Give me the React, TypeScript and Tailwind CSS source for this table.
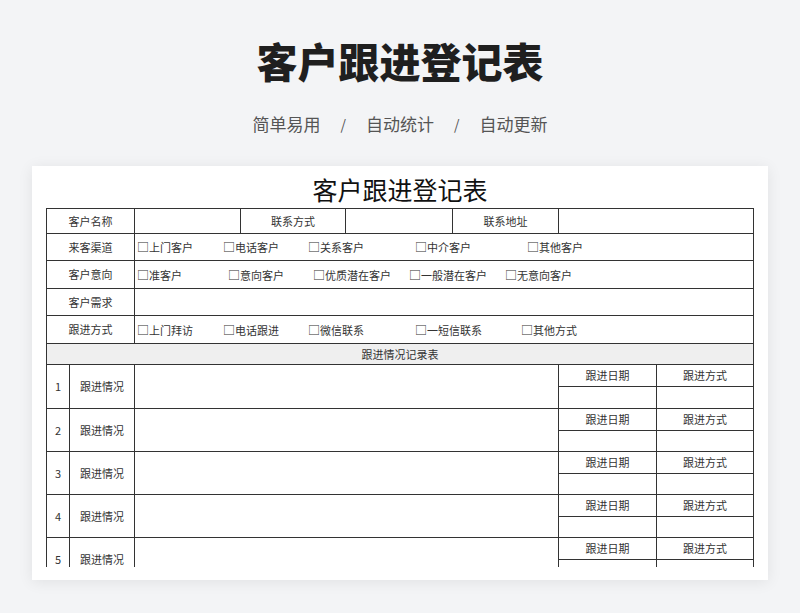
import React from "react";

const font = { fontFamily: '"Noto Sans CJK SC", "Noto Sans", sans-serif' };

function Cell({
  w,
  children,
  className = "",
}: {
  w: string;
  children?: React.ReactNode;
  className?: string;
}) {
  return (
    <div
      className={`${w} shrink-0 border-r border-[#333] flex items-center justify-center ${className}`}
    >
      {children}
    </div>
  );
}

function Checks({ items }: { items: [string, string][] }) {
  return (
    <div className="flex-1 flex items-center pl-[2px] border-r border-[#333] h-full">
      {items.map(([label, w]) => (
        <span key={label} className={`${w} shrink-0 whitespace-nowrap`}>
          <span className="text-[12px]">□</span>
          {label}
        </span>
      ))}
    </div>
  );
}

function Record({ n, h }: { n: number; h: string }) {
  return (
    <div className={`flex ${h} border-b border-[#333]`}>
      <Cell w="w-[23px]">{n}</Cell>
      <Cell w="w-[65px]">跟进情况</Cell>
      <Cell w="w-[424px]" />
      <div className="w-[98px] shrink-0 border-r border-[#333] flex flex-col">
        <div className="h-[22px] flex items-center justify-center border-b border-[#333]">跟进日期</div>
        <div className="flex-1" />
      </div>
      <div className="flex-1 border-r border-[#333] flex flex-col">
        <div className="h-[22px] flex items-center justify-center border-b border-[#333]">跟进方式</div>
        <div className="flex-1" />
      </div>
    </div>
  );
}

export default function App() {
  return (
    <div className="w-[800px] h-[613px] overflow-hidden bg-[#f3f4f6] flex flex-col items-center" style={font}>
      <h1 className="mt-[40px] h-[41px] leading-[41px] text-[41px] font-black text-[#1f1f1f]">
        客户跟进登记表
      </h1>
      <div className="mt-[31px] h-[24px] leading-[24px] text-[17px] text-[#555] flex items-center">
        <span>简单易用</span>
        <span className="mx-[20px] text-[14px]">/</span>
        <span>自动统计</span>
        <span className="mx-[20px] text-[14px]">/</span>
        <span>自动更新</span>
      </div>
      <div className="mt-[30px] w-[736px] h-[414px] bg-white shadow-[0_2px_14px_rgba(0,0,0,0.08)] pt-[7px] px-[14px] pb-[13px] flex flex-col">
        <div className="h-[35px] leading-[33px] text-center text-[25px] text-[#111]">客户跟进登记表</div>
        <div className="h-[359px] overflow-hidden">
          <div className="w-[708px] border-l border-t border-[#333] text-[11px] text-[#333]">
            <div className="flex h-[25px] border-b border-[#333]">
              <Cell w="w-[88px]">客户名称</Cell>
              <Cell w="w-[106px]" />
              <Cell w="w-[105px]">联系方式</Cell>
              <Cell w="w-[107px]" />
              <Cell w="w-[106px]">联系地址</Cell>
              <Cell w="flex-1" />
            </div>
            <div className="flex h-[27px] border-b border-[#333]">
              <Cell w="w-[88px]">来客渠道</Cell>
              <Checks
                items={[
                  ["上门客户", "w-[86px]"],
                  ["电话客户", "w-[85px]"],
                  ["关系客户", "w-[107px]"],
                  ["中介客户", "w-[112px]"],
                  ["其他客户", "w-[80px]"],
                ]}
              />
            </div>
            <div className="flex h-[28px] border-b border-[#333]">
              <Cell w="w-[88px]">客户意向</Cell>
              <Checks
                items={[
                  ["准客户", "w-[91px]"],
                  ["意向客户", "w-[85px]"],
                  ["优质潜在客户", "w-[96px]"],
                  ["一般潜在客户", "w-[96px]"],
                  ["无意向客户", "w-[80px]"],
                ]}
              />
            </div>
            <div className="flex h-[27px] border-b border-[#333]">
              <Cell w="w-[88px]">客户需求</Cell>
              <Cell w="flex-1" />
            </div>
            <div className="flex h-[28px] border-b border-[#333]">
              <Cell w="w-[88px]">跟进方式</Cell>
              <Checks
                items={[
                  ["上门拜访", "w-[86px]"],
                  ["电话跟进", "w-[85px]"],
                  ["微信联系", "w-[107px]"],
                  ["一短信联系", "w-[106px]"],
                  ["其他方式", "w-[80px]"],
                ]}
              />
            </div>
            <div className="flex h-[21px] border-b border-[#333] border-r bg-[#efefef] items-center justify-center">
              跟进情况记录表
            </div>
            <Record n={1} h="h-[44px]" />
            <Record n={2} h="h-[43px]" />
            <Record n={3} h="h-[43px]" />
            <Record n={4} h="h-[43px]" />
            <Record n={5} h="h-[43px]" />
          </div>
        </div>
      </div>
    </div>
  );
}
